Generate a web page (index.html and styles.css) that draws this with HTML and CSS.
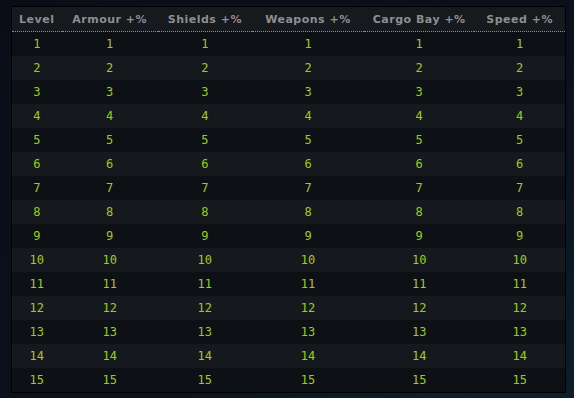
FILE: index.html
```html
<!DOCTYPE html>
<html>
<head>
<meta charset="utf-8">
<link rel="stylesheet" href="styles.css">
</head>
<body>
<div class="page">
<table class="levels">
<colgroup>
<col class="c1"><col class="c2"><col class="c3"><col class="c4"><col class="c5"><col class="c6">
</colgroup>
<thead>
<tr><th>Level</th><th>Armour +%</th><th>Shields +%</th><th>Weapons +%</th><th>Cargo Bay +%</th><th>Speed +%</th></tr>
</thead>
<tbody>
<tr><td>1</td><td>1</td><td>1</td><td>1</td><td>1</td><td>1</td></tr>
<tr><td>2</td><td>2</td><td>2</td><td>2</td><td>2</td><td>2</td></tr>
<tr><td>3</td><td>3</td><td>3</td><td>3</td><td>3</td><td>3</td></tr>
<tr><td>4</td><td>4</td><td>4</td><td>4</td><td>4</td><td>4</td></tr>
<tr><td>5</td><td>5</td><td>5</td><td>5</td><td>5</td><td>5</td></tr>
<tr><td>6</td><td>6</td><td>6</td><td>6</td><td>6</td><td>6</td></tr>
<tr><td>7</td><td>7</td><td>7</td><td>7</td><td>7</td><td>7</td></tr>
<tr><td>8</td><td>8</td><td>8</td><td>8</td><td>8</td><td>8</td></tr>
<tr><td>9</td><td>9</td><td>9</td><td>9</td><td>9</td><td>9</td></tr>
<tr><td>10</td><td>10</td><td>10</td><td>10</td><td>10</td><td>10</td></tr>
<tr><td>11</td><td>11</td><td>11</td><td>11</td><td>11</td><td>11</td></tr>
<tr><td>12</td><td>12</td><td>12</td><td>12</td><td>12</td><td>12</td></tr>
<tr><td>13</td><td>13</td><td>13</td><td>13</td><td>13</td><td>13</td></tr>
<tr><td>14</td><td>14</td><td>14</td><td>14</td><td>14</td><td>14</td></tr>
<tr><td>15</td><td>15</td><td>15</td><td>15</td><td>15</td><td>15</td></tr>
</tbody>
</table>
</div>
</body>
</html>
```
FILE: styles.css
```css
html, body {
  margin: 0;
  padding: 0;
}
body {
  width: 574px;
  height: 398px;
  overflow: hidden;
  background: radial-gradient(ellipse at 85% 110%, #0c2230 0%, #0a1420 45%, #0a0d16 100%);
}
.page {
  padding: 6px 0 0 11px;
}
.levels {
  width: 555px;
  border-collapse: collapse;
  border: 1px solid #000;
  table-layout: fixed;
}
.c1 { width: 50px; }
.c2 { width: 96px; }
.c3 { width: 94px; }
.c4 { width: 112px; }
.c5 { width: 110px; }
.c6 { width: 91px; }
.levels th {
  height: 24px;
  padding: 0;
  background: #16191d;
  color: #8e8e8e;
  font-family: "DejaVu Sans", sans-serif;
  font-size: 11px;
  font-weight: bold;
  letter-spacing: 0.5px;
  text-align: center;
  white-space: nowrap;
  border-bottom: 1px dotted #8a8a8a;
}
.levels td {
  height: 24px;
  padding: 0;
  text-align: center;
  color: #a3cc0c;
  font-family: "DejaVu Sans Mono", monospace;
  font-size: 12px;
}
.levels tbody tr:nth-child(odd) td { background: #0d1015; }
.levels tbody tr:nth-child(even) td { background: #15191d; }
```
